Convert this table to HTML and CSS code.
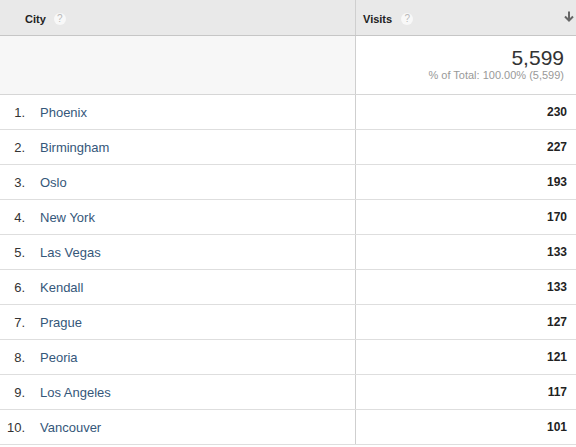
FILE: index.html
```html
<!DOCTYPE html>
<html>
<head>
<meta charset="utf-8">
<link rel="stylesheet" href="styles.css">
</head>
<body>
<div class="table">
  <div class="row head">
    <div class="cell c1"><span class="htext">City</span><span class="help">?</span></div>
    <div class="cell c2"><span class="htext">Visits</span><span class="help help2">?</span>
      <svg class="sort" width="10" height="11" viewBox="0 0 10 11"><path d="M5 0.5 V9.5 M1 5.5 L5 9.5 L9 5.5" fill="none" stroke="#666" stroke-width="2"/></svg>
    </div>
  </div>
  <div class="row total">
    <div class="cell c1"></div>
    <div class="cell c2 tot">
      <div class="big">5,599</div>
      <div class="pct">% of Total: 100.00% (5,599)</div>
    </div>
  </div>
  <div class="row item"><div class="cell c1"><span class="num">1.</span><span class="city">Phoenix</span></div><div class="cell c2 val">230</div></div>
  <div class="row item"><div class="cell c1"><span class="num">2.</span><span class="city">Birmingham</span></div><div class="cell c2 val">227</div></div>
  <div class="row item"><div class="cell c1"><span class="num">3.</span><span class="city">Oslo</span></div><div class="cell c2 val">193</div></div>
  <div class="row item"><div class="cell c1"><span class="num">4.</span><span class="city">New York</span></div><div class="cell c2 val">170</div></div>
  <div class="row item"><div class="cell c1"><span class="num">5.</span><span class="city">Las Vegas</span></div><div class="cell c2 val">133</div></div>
  <div class="row item"><div class="cell c1"><span class="num">6.</span><span class="city">Kendall</span></div><div class="cell c2 val">133</div></div>
  <div class="row item"><div class="cell c1"><span class="num">7.</span><span class="city">Prague</span></div><div class="cell c2 val">127</div></div>
  <div class="row item"><div class="cell c1"><span class="num">8.</span><span class="city">Peoria</span></div><div class="cell c2 val">121</div></div>
  <div class="row item"><div class="cell c1"><span class="num">9.</span><span class="city">Los Angeles</span></div><div class="cell c2 val">117</div></div>
  <div class="row item"><div class="cell c1"><span class="num">10.</span><span class="city">Vancouver</span></div><div class="cell c2 val">101</div></div>
</div>
</body>
</html>
```
FILE: styles.css
```css
html, body {
  margin: 0;
  padding: 0;
  background: #fff;
}
body {
  font-family: "Liberation Sans", Arial, sans-serif;
  color: #222;
  width: 576px;
  height: 447px;
  overflow: hidden;
}
.table {
  display: flex;
  flex-direction: column;
}
.row {
  display: grid;
  grid-template-columns: 355px 1fr;
}
.cell {
  box-sizing: border-box;
}
.c2 {
  border-left: 1px solid #cfcfcf;
}
.head {
  background: #e9e9e9;
  height: 36px;
  border-bottom: 1px solid #c6c6c6;
  box-sizing: border-box;
}
.head .cell {
  display: flex;
  align-items: center;
  padding-top: 3px;
  line-height: 32px;
  font-size: 11px;
  font-weight: bold;
  color: #222;
}
.head .c1 {
  padding-left: 25px;
}
.head .c2 {
  padding-left: 7px;
  padding-right: 2px;
}
.help {
  display: inline-block;
  width: 12px;
  height: 12px;
  border-radius: 50%;
  background: #f8f8f8;
  color: #b8b8b8;
  font-size: 10px;
  font-weight: normal;
  line-height: 12px;
  text-align: center;
  margin-left: 8px;
  margin-top: -1px;
}
.help2 {
  margin-left: 9px;
}
.sort {
  margin-left: auto;
  margin-top: -5px;
}
.total {
  height: 59px;
  border-bottom: 1px solid #d6d6d6;
  box-sizing: border-box;
}
.total .c1 {
  background: #f7f7f7;
}
.tot {
  text-align: right;
  padding-top: 11px;
  padding-right: 12px;
}
.big {
  font-size: 21px;
  line-height: 22px;
  color: #333;
}
.pct {
  font-size: 11px;
  line-height: 12px;
  color: #999;
}
.item {
  height: 35px;
  border-bottom: 1px solid #dedede;
  box-sizing: border-box;
  font-size: 13px;
  line-height: 33px;
  padding-top: 1px;
}
.item .c2 {
  margin-top: -1px;
  padding-top: 1px;
}
.item .c1 {
  display: flex;
}
.num {
  width: 25px;
  text-align: right;
  color: #333;
}
.city {
  margin-left: 15px;
  color: #35577a;
}
.val {
  text-align: right;
  font-weight: bold;
  font-size: 12px;
  padding-right: 9px;
  color: #222;
}
```
